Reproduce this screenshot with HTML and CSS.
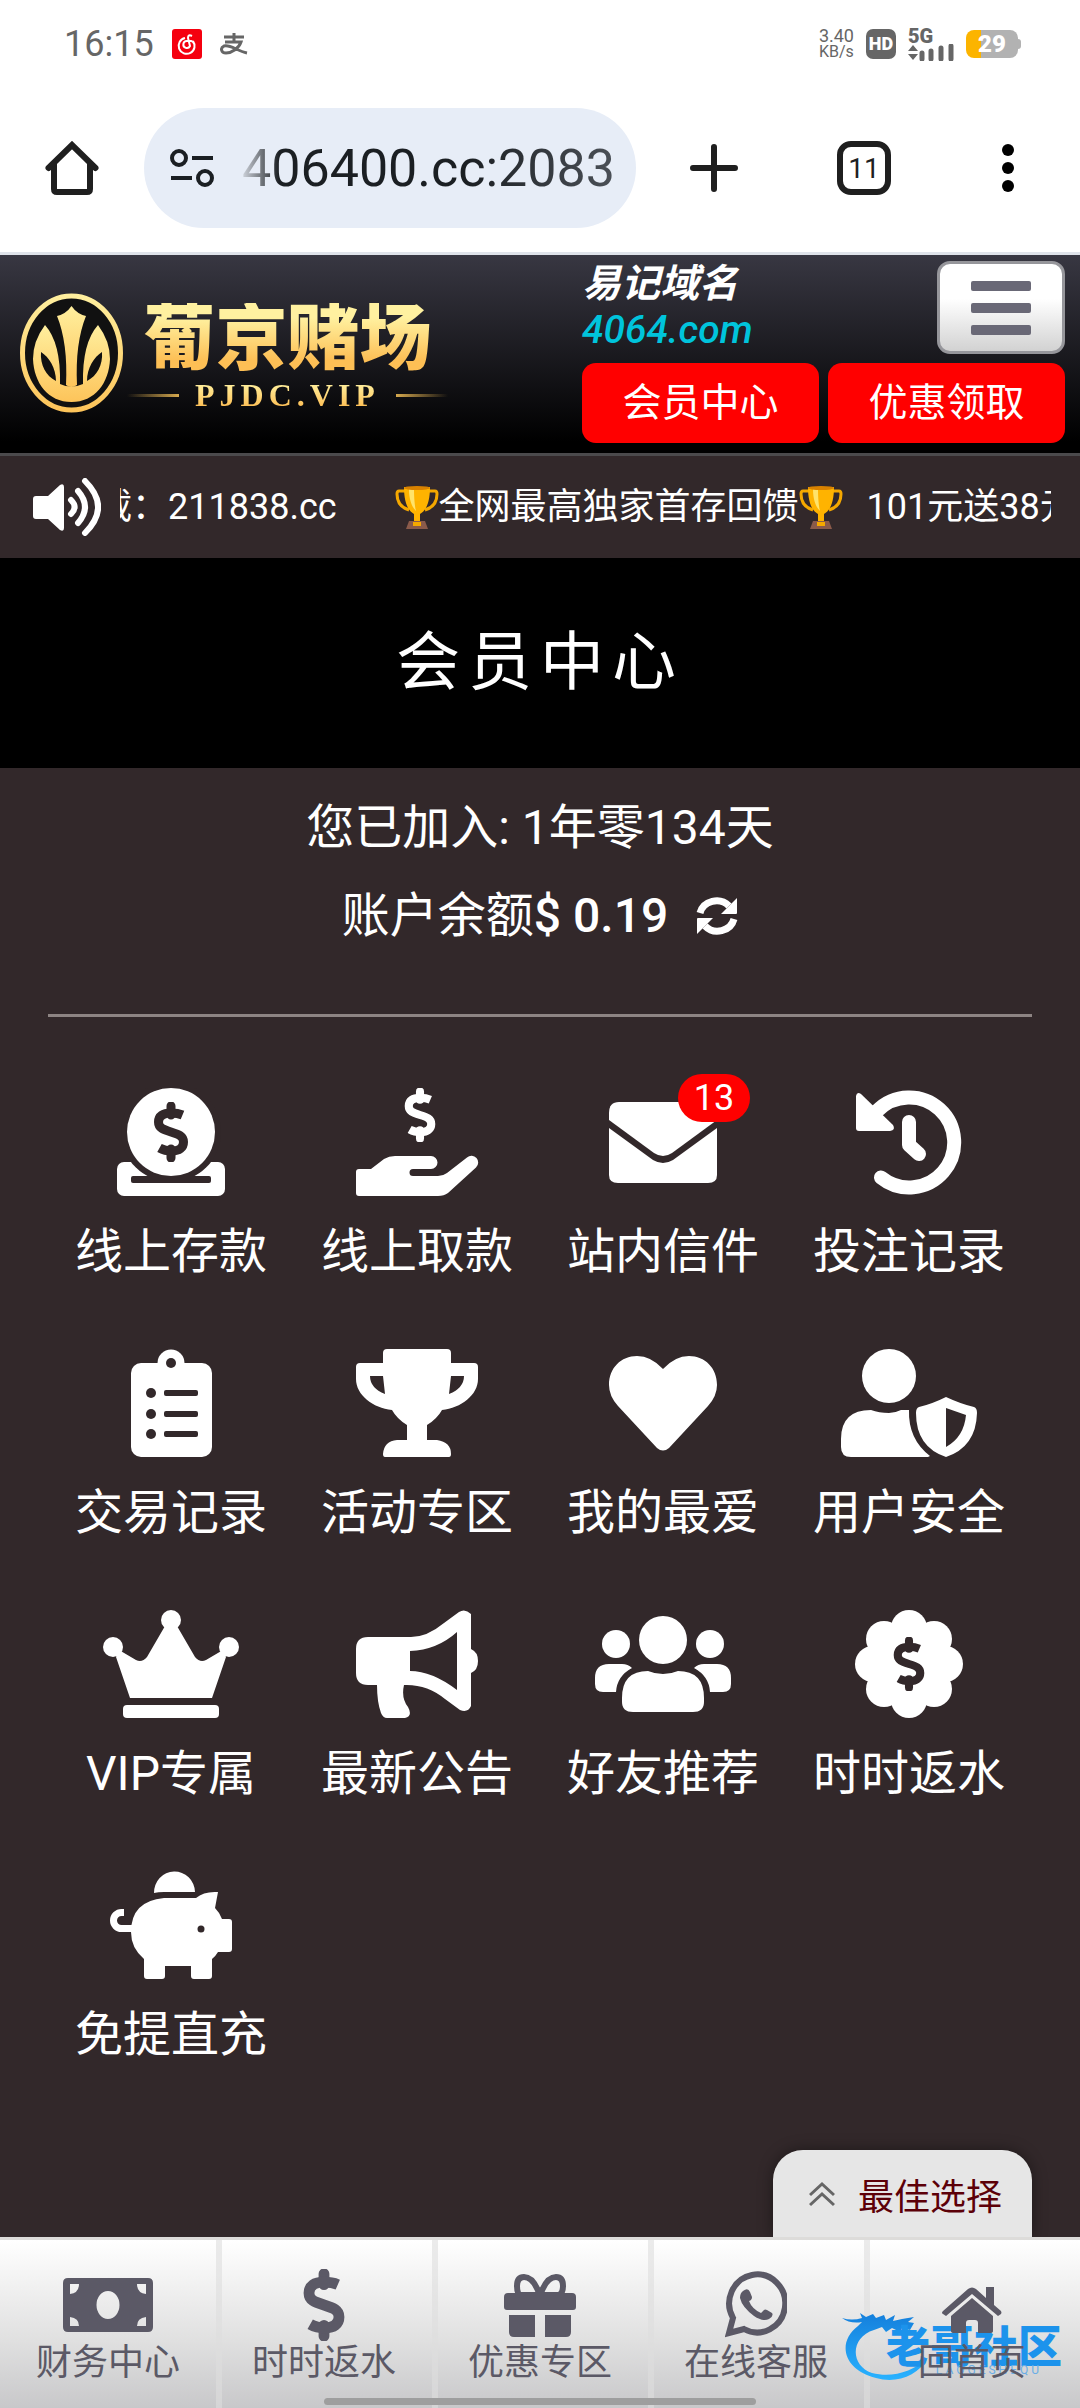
FILE: index.html
```html
<!DOCTYPE html>
<html lang="zh-CN">
<head>
    <meta charset="UTF-8">
    <meta name="viewport" content="width=device-width, initial-scale=1.0">
    <title>会员中心</title>
    <link rel="stylesheet" href="styles.css">
</head>
<body>
    <!-- Shared symbols -->
    <svg class="defs" width="0" height="0" aria-hidden="true">
        <symbol id="dollar" viewBox="0 0 34 60">
            <path d="M17 4v9M17 47v9" fill="none" stroke="currentColor" stroke-width="9" stroke-linecap="round"/>
            <path d="M28.500 13C25 11.500 21 11 17 11C9 11 4.500 14 4.500 20C4.500 26 9 27.500 17 30C25 32.500 29.500 34 29.500 40C29.500 46 25 49 18 49C13 49 9 48 5.500 46" fill="none" stroke="currentColor" stroke-width="9"/>
        </symbol>
        <symbol id="trophy-cup" viewBox="0 0 44 44">
            <path d="M10 6H4q-2 0-2 3c0 9 5 14 12 16M34 6h6q2 0 2 3c0 9-5 14-12 16" fill="none" stroke="#f5a800" stroke-width="3"/>
            <path d="M9 2h26c0 14-3 23-10 27v7h-6v-7C12 25 9 16 9 2z" fill="#ffb300"/>
            <path d="M14 4h5c0 10 1 18 2 22c-4-4-7-11-7-22z" fill="#ffe36b"/>
            <ellipse cx="22" cy="3" rx="13" ry="2" fill="#d98200"/>
            <path d="M14 36h16l3 8H11z" fill="#8a5a4a"/>
            <path d="M18 37h8v4h-8z" fill="#f5a800"/>
        </symbol>
    </svg>

    <div class="status-bar">
        <span class="clock">16:15</span>
        <svg class="app-icon" viewBox="0 0 30 30">
            <rect width="30" height="30" rx="3" fill="#f5000f"/>
            <path d="M13 9a8 8 0 1 0 8 3M20 7q-4-2-4 2l2 8a3.500 3.500 0 1 1-3-5q6-1 7 3" fill="none" stroke="#fff" stroke-width="2"/>
        </svg>
        <svg class="pay-icon" viewBox="0 0 28 22">
            <path d="M4 4h20M14 0v9M5 9h16c-2 6-9 11-15 11c-5 0-6-5-2-7c6-2 13 5 23 7" fill="none" stroke="#666" stroke-width="3"/>
        </svg>
        <div class="status-right">
            <span class="speed"><b>3.40</b>KB/s</span>
            <span class="hd">HD</span>
            <span class="signal">
                <span class="network">5G</span>
                <svg viewBox="0 0 46 17" width="46" height="17">
                    <path d="M0 7l5-6 5 6zM0 10l5 6 5-6z" fill="#666"/>
                    <path d="M14 9v6M23 7v8M33 4v11M43 2v13" stroke="#666" stroke-width="5" stroke-linecap="round"/>
                </svg>
            </span>
            <span class="battery">29</span>
        </div>
    </div>

    <div class="toolbar">
        <button class="tool-button" aria-label="主页">
            <svg viewBox="0 0 54 54" width="54" height="54">
                <path d="M3.500 27L27 4l23.500 23M9 22v26q0 3 3 3h30q3 0 3-3V22" fill="none" stroke="#1f1f1f" stroke-width="6" stroke-linecap="round"/>
            </svg>
        </button>
        <div class="address">
            <svg viewBox="0 0 44 38" width="44" height="38">
                <g fill="none" stroke="#1b1f23" stroke-width="4">
                    <circle cx="9" cy="9" r="7"/><circle cx="35" cy="29" r="7"/>
                    <path d="M22 9h21M1 29h21"/>
                </g>
            </svg>
            <span class="url">406400.cc:2083</span>
        </div>
        <button class="tool-button" aria-label="新标签页">
            <svg viewBox="0 0 48 48" width="48" height="48">
                <path d="M24 3v42M3 24h42" stroke="#1f1f1f" stroke-width="6" stroke-linecap="round"/>
            </svg>
        </button>
        <button class="tool-button tabs">11</button>
        <button class="tool-button" aria-label="更多">
            <svg viewBox="0 0 12 48" width="12" height="48">
                <circle cx="6" cy="6" r="6"/><circle cx="6" cy="24" r="6"/><circle cx="6" cy="42" r="6"/>
            </svg>
        </button>
    </div>

    <header class="site-header">
        <a class="logo" href="#">
            <svg viewBox="0 0 103 120" width="103" height="120">
                <defs>
                    <linearGradient id="gold" x1="0" y1="0" x2="0" y2="1">
                        <stop offset="0" stop-color="#ffef9e"/>
                        <stop offset="1" stop-color="#fdc45a"/>
                    </linearGradient>
                </defs>
                <ellipse cx="51.500" cy="60" rx="49" ry="57" fill="#111" stroke="url(#gold)" stroke-width="5"/>
                <path d="M51.500 13Q57 21 66 23Q55 50 57 92Q51 96 46 92Q48 50 37 23Q46 21 51.500 13Z" fill="url(#gold)"/>
                <path fill-rule="evenodd" d="M25 32Q41 50 40 91Q51 96 63 91Q62 50 78 32Q90 48 90 66C89 90 75 109 51.500 109C28 109 14 90 13 66Q13 48 25 32ZM21 59C20 72 26 83 36 88C36 75 29 64 21 59ZM82 59C74 64 67 75 67 88C77 83 83 72 82 59Z" fill="url(#gold)"/>
            </svg>
            <span class="logo-text">
                <span class="logo-name">葡京赌场</span>
                <span class="logo-domain">PJDC.VIP</span>
            </span>
        </a>
        <div class="header-side">
            <div class="header-top">
                <p class="easy-domain">易记域名<br><a href="#">4064.com</a></p>
                <button class="menu-button" aria-label="菜单"><i></i><i></i><i></i></button>
            </div>
            <div class="header-links">
                <a href="#">会员中心</a>
                <a href="#">优惠领取</a>
            </div>
        </div>
    </header>

    <div class="notice">
        <svg viewBox="0 0 68 58" width="68" height="58">
            <path d="M0 21q0-3 3-3h12L27 7q4-2 4 2v41q0 4-4 2L15 41H3q-3 0-3-3z" fill="#fff"/>
            <path d="M38 22q7 7 0 14M45 13q14 16 0 32M52 3q26 26 0 52" fill="none" stroke="#fff" stroke-width="6" stroke-linecap="round"/>
        </svg>
        <div class="marquee">
            <div class="marquee-track">
                <span class="site-address">载：211838.cc</span>
                <span class="promo"><svg width="44" height="44"><use href="#trophy-cup"/></svg>全网最高独家首存回馈<svg width="44" height="44"><use href="#trophy-cup"/></svg></span>
                <span>101元送38元</span>
            </div>
        </div>
    </div>

    <h1 class="page-title">会员中心</h1>

    <main class="member">
        <div class="summary">
            <p>您已加入: 1年零134天</p>
            <p>账户余额<strong>$ 0.19</strong>
                <button class="refresh" aria-label="刷新">
                    <svg viewBox="0 0 42 40" width="42" height="40">
                        <path d="M4 17A17 16 0 0 1 33 10M38 23A17 16 0 0 1 9 30" fill="none" stroke="#fff" stroke-width="7"/>
                        <path d="M41 2v15q0 1-1 1H25zM1 38V23q0-1 1-1h15z" fill="#fff"/>
                    </svg>
                </button>
            </p>
        </div>

        <nav class="menu-grid">
            <a class="menu-item" href="#">
                <svg class="menu-icon" viewBox="0 0 140 108">
                    <rect x="16" y="74" width="108" height="34" rx="7"/>
                    <circle class="cut" cx="70" cy="44" r="50"/>
                    <path class="cut" d="M32 88h76q2 0 2 2v3q0 2-2 2H32q-2 0-2-2v-3q0-2 2-2z"/>
                    <circle cx="70" cy="44" r="44"/>
                    <use class="cut-mark" href="#dollar" x="53" y="14" width="34" height="60"/>
                </svg>
                <span>线上存款</span>
            </a>
            <a class="menu-item" href="#">
                <svg class="menu-icon" viewBox="0 0 140 108">
                    <use href="#dollar" x="56" y="0" width="34" height="54"/>
                    <path d="M12 81H24L37 71Q42 68 48 68H84a6.500 6.500 0 0 1 0 13H66a3.500 3.500 0 0 0 0 7H91q5 0 9-3L120 69.500a6.500 6.500 0 0 1 9 10L101 105Q97 108 91 108H12Q9 108 9 105V84Q9 81 12 81Z"/>
                </svg>
                <span>线上取款</span>
            </a>
            <a class="menu-item" href="#">
                <svg class="menu-icon" viewBox="0 0 140 108">
                    <path d="M16 25Q16 14 26 14H114Q124 14 124 25V32L79 65Q70 71 61 65L16 32Z"/>
                    <path d="M16 40L60 72Q70 78 80 72L124 40V87Q124 95 115 95H25Q16 95 16 87Z"/>
                </svg>
                <b class="badge">13</b>
                <span>站内信件</span>
            </a>
            <a class="menu-item" href="#">
                <svg class="menu-icon" viewBox="0 0 140 108">
                    <path class="line" d="M42 89.500A45 45 0 1 0 38 23M70 34V57L80 66"/>
                    <path d="M17 8Q18 3 22 6L54 37Q57 42 51 43H20Q17 43 17 40Z"/>
                </svg>
                <span>投注记录</span>
            </a>
            <a class="menu-item" href="#">
                <svg class="menu-icon" viewBox="0 0 140 108">
                    <rect x="30" y="14" width="81" height="94" rx="10"/>
                    <circle cx="70" cy="14" r="13.500"/>
                    <g class="cut">
                        <circle cx="70" cy="14" r="5"/>
                        <circle cx="50" cy="44" r="5"/><circle cx="50" cy="65" r="5"/><circle cx="50" cy="85" r="5"/>
                        <rect x="63" y="41" width="34" height="6" rx="2"/><rect x="63" y="62" width="34" height="6" rx="2"/><rect x="63" y="82" width="34" height="6" rx="2"/>
                    </g>
                </svg>
                <span>交易记录</span>
            </a>
            <a class="menu-item" href="#">
                <svg class="menu-icon" viewBox="0 0 140 108">
                    <path fill-rule="evenodd" d="M36 4Q36 0 40 0H100Q104 0 104 4V14H127Q131 14 131 18V30C131 46 114 59 95 61Q90 70 80 76V91H90Q104 93 104 105Q104 108 102 108H38Q36 108 36 105Q37 92 50 91H60V76Q50 70 45 61C26 59 9 46 9 30V18Q9 14 13 14H36ZM23 27H36L38 45Q23 39 23 27ZM117 27H104L102 45Q117 39 117 27Z"/>
                </svg>
                <span>活动专区</span>
            </a>
            <a class="menu-item" href="#">
                <svg class="menu-icon" viewBox="0 0 140 108">
                    <path d="M70 20Q58 7 44 7C28 7 16 19 16 36Q16 47 25 57L64 99Q70 104 76 99L115 57Q124 47 124 36C124 19 112 7 96 7Q82 7 70 20Z"/>
                </svg>
                <span>我的最爱</span>
            </a>
            <a class="menu-item" href="#">
                <svg class="menu-icon" viewBox="0 0 140 108">
                    <circle cx="50" cy="27" r="27"/>
                    <path d="M2 90Q2 61 32 61Q40 64 50 64Q56 64 62 61H70Q69 90 91 107L89 108H12Q2 108 2 98Z"/>
                    <path fill-rule="evenodd" d="M107 48Q122 55 135 58Q138 59 138 64Q137 98 107 108Q77 98 77 64Q77 59 80 58Q93 55 107 48ZM107 59V98Q125 88 127 66Z"/>
                </svg>
                <span>用户安全</span>
            </a>
            <a class="menu-item" href="#">
                <svg class="menu-icon" viewBox="0 0 140 108">
                    <circle cx="70" cy="10" r="10"/><circle cx="12" cy="37" r="10"/><circle cx="128" cy="37" r="10"/>
                    <path d="M64 16L46 47Q41 53 35 50L18 40L15 47L29 88H111L125 47L122 40L105 50Q99 53 94 47L76 16Z"/>
                    <rect x="22" y="95" width="96" height="13" rx="4"/>
                </svg>
                <span>VIP专属</span>
            </a>
            <a class="menu-item" href="#">
                <svg class="menu-icon" viewBox="0 0 140 108">
                    <path fill-rule="evenodd" d="M21 27H64Q80 27 97 13L112 2Q118-2 124 4V39Q131 42 131 51T124 63V96Q121 103 113 100L98 89Q80 74 57 75Q54 88 61 97Q66 106 58 108H40Q36 108 34 103Q30 92 30 75H21Q9 75 9 63V39Q9 27 21 27ZM63 41V61Q85 61 110 80V22Q90 40 63 41Z"/>
                </svg>
                <span>最新公告</span>
            </a>
            <a class="menu-item" href="#">
                <svg class="menu-icon" viewBox="0 0 140 108">
                    <circle cx="70" cy="30" r="24"/><circle cx="23" cy="34" r="14"/><circle cx="117" cy="34" r="14"/>
                    <path d="M29 88Q29 61 55 61Q62 64 70 64Q78 64 85 61Q111 61 111 88V92Q111 102 100 102H40Q29 102 29 92Z"/>
                    <path d="M16 54H29Q35 54 39 58Q24 66 23 82H10Q2 82 2 74V68Q2 54 16 54ZM124 54H111Q105 54 101 58Q116 66 117 82H130Q138 82 138 74V68Q138 54 124 54Z"/>
                </svg>
                <span>好友推荐</span>
            </a>
            <a class="menu-item" href="#">
                <svg class="menu-icon" viewBox="0 0 140 108">
                    <circle cx="70" cy="54" r="40"/>
                    <circle cx="70" cy="18" r="18"/><circle cx="95" cy="29" r="18"/><circle cx="106" cy="54" r="18"/><circle cx="95" cy="79" r="18"/>
                    <circle cx="70" cy="90" r="18"/><circle cx="45" cy="79" r="18"/><circle cx="34" cy="54" r="18"/><circle cx="45" cy="29" r="18"/>
                    <use class="cut-mark" href="#dollar" x="54" y="27" width="32" height="54"/>
                </svg>
                <span>时时返水</span>
            </a>
            <a class="menu-item" href="#">
                <svg class="menu-icon" viewBox="0 0 140 108">
                    <path d="M53 22A20.500 21 0 0 1 94 21H63Q57 21 53 22Z"/>
                    <path d="M63 27H95Q103 20 117 21L114 37Q119 42 121 48H128Q131 48 131 51V78Q131 81 128 81H117Q114 86 111 88V105Q111 108 108 108H93Q90 108 90 105V95H64V105Q64 108 61 108H46Q43 108 43 105V88Q30 77 30 61Q30 30 63 27Z"/>
                    <path d="M32 57.500H20.500A8 8 0 0 1 20.500 41.500H23" fill="none" stroke="#fff" stroke-width="7"/>
                    <circle class="cut" cx="100" cy="58" r="3.500"/>
                </svg>
                <span>免提直充</span>
            </a>
        </nav>

        <button class="best-choice">
            <svg viewBox="0 0 26 26" width="26" height="26">
                <path d="M1 14L13 3l12 11M1 24l12-11 12 11" fill="none" stroke="#666" stroke-width="3"/>
            </svg>
            最佳选择
        </button>
    </main>

    <nav class="bottom-nav">
        <a href="#">
            <svg viewBox="0 0 90 72" width="90" height="72">
                <path fill-rule="evenodd" d="M5 9H85q5 0 5 5V58q0 5-5 5H5q-5 0-5-5V14q0-5 5-5zM7 15v10q9-1 9-10zM83 15H74q0 9 9 10zM7 57h9q0-8-9-9zM83 57v-9q-9 1-9 9zM45 22a11.500 14 0 1 0 0 28a11.500 14 0 1 0 0-28z"/>
            </svg>
            <span>财务中心</span>
        </a>
        <a href="#">
            <svg viewBox="0 0 42 72" width="42" height="72"><use href="#dollar" width="42" height="72"/></svg>
            <span>时时返水</span>
        </a>
        <a href="#">
            <svg viewBox="0 0 72 72" width="72" height="72">
                <path d="M4 24h64q4 0 4 4v10q0 3-3 3H3q-3 0-3-3V28q0-4 4-4zM5 46h26v22H10q-5 0-5-5zM41 46h26v17q0 5-5 5H41z"/>
                <path d="M35 24Q29 8 20 8Q13 8 13 17T17 26H55Q59 24 59 17Q59 8 52 8Q43 8 37 24" fill="none" stroke="#5b5966" stroke-width="6"/>
            </svg>
            <span>优惠专区</span>
        </a>
        <a href="#">
            <svg viewBox="0 0 62 72" width="62" height="72">
                <path d="M4 64L8 49A28 29 0 1 1 19 60Z" fill="none" stroke="#5b5966" stroke-width="6"/>
                <path d="M18 22q5-4 7 1l2 5q0 3-3 4q3 8 12 12l3-3q1-1 3 0l5 3q2 3-3 6q-6 3-15-3Q17 38 15 29q0-5 3-7z"/>
            </svg>
            <span>在线客服</span>
        </a>
        <a href="#">
            <svg viewBox="0 0 62 72" width="62" height="72">
                <path d="M2 42L27 20q4-3 8 0L45 29V18h8V36L60 42q1 2 0 3l-3 2L31 25 5 47l-3-2q-2-1 0-3z"/>
                <path d="M10 47L31 29 52 47V62q0 2-3 2H37V54q0-3-3-3h-6q-3 0-3 3V64H13q-3 0-3-2z"/>
            </svg>
            <span>回首页</span>
        </a>
        <div class="watermark">
            <svg viewBox="0 0 86 70" width="86" height="70">
                <defs>
                    <linearGradient id="wave" x1="0" y1="0" x2="0" y2="1">
                        <stop offset="0" stop-color="#147fdc"/>
                        <stop offset="1" stop-color="#29b2ff"/>
                    </linearGradient>
                </defs>
                <path d="M0 6Q10 9 20 6L18 1L24 5L31 2L34 6L42 3L44 8L53 3L51 9L60 7L72 5L66 10L72 11L68 18L60 16L58 20L50 16L44 20L40 15L32 18C8 25 8 54 30 61C50 66 70 60 86 46C76 64 54 72 34 66C2 58-6 31 16 14L20 10Q8 12 0 6Z" fill="url(#wave)"/>
            </svg>
            <span class="watermark-name">老哥社区</span>
            <span class="watermark-latin">LAOGESHEQU</span>
        </div>
        <i class="gesture-bar"></i>
    </nav>
</body>
</html>
```
FILE: styles.css
```css
* {
    box-sizing: border-box;
}

body {
    margin: 0;
    min-height: 100vh;
    display: flex;
    flex-direction: column;
    background: #32282a;
    color: #fff;
    font-family: Roboto, "Noto Sans CJK SC", sans-serif;
    font-size: 36px;
}

a {
    color: inherit;
    text-decoration: none;
}

p {
    margin: 0;
}

button {
    margin: 0;
    padding: 0;
    border: 0;
    background: none;
    color: inherit;
    font: inherit;
    cursor: pointer;
}

svg {
    flex: none;
}

.defs {
    position: absolute;
}

/* Phone status bar */
.status-bar {
    height: 84px;
    padding: 4px 62px 0 64px;
    display: flex;
    align-items: center;
    background: #fff;
    color: #666;
}

.clock {
    font-size: 36px;
}

.app-icon {
    width: 30px;
    height: 30px;
    margin-left: 18px;
}

.pay-icon {
    width: 28px;
    height: 22px;
    margin-left: 18px;
}

.status-right {
    margin-left: auto;
    display: flex;
    align-items: center;
    gap: 12px;
}

.speed {
    font-size: 16px;
    line-height: 16px;
    text-align: center;
}

.speed b {
    display: block;
    font-size: 18px;
    font-weight: 400;
}

.hd {
    width: 30px;
    height: 30px;
    border-radius: 7px;
    background: #666;
    color: #fff;
    font-size: 18px;
    font-weight: 900;
    line-height: 30px;
    text-align: center;
}

.signal {
    display: flex;
    flex-direction: column;
}

.network {
    font-size: 20px;
    font-weight: 900;
    line-height: 16px;
}

.battery {
    width: 52px;
    height: 28px;
    border-radius: 8px;
    background: linear-gradient(90deg, #fcb400 29%, #b2b2b2 29%);
    color: #fff;
    font-size: 24px;
    font-weight: 900;
    line-height: 28px;
    text-align: center;
    position: relative;
}

.battery::after {
    content: "";
    position: absolute;
    right: -3px;
    top: 9px;
    width: 4px;
    height: 10px;
    border-radius: 0 3px 3px 0;
    background: #b2b2b2;
}

/* Browser toolbar */
.toolbar {
    height: 171px;
    padding: 0 45px;
    display: flex;
    align-items: center;
    background: #fff;
    color: #1f1f1f;
    border-bottom: 3px solid #dfe3ea;
}

.tool-button {
    min-width: 54px;
    display: flex;
    align-items: center;
    justify-content: center;
}

.address {
    flex: 1;
    height: 120px;
    margin: 0 51px 0 45px;
    padding: 0 20px 0 26px;
    display: flex;
    align-items: center;
    gap: 28px;
    border-radius: 60px;
    background: #e7edf7;
    overflow: hidden;
}

.url {
    font-size: 52px;
    background: linear-gradient(90deg, #d0d5dd, #1b1f23 10%, #1b1f23 60%, #4b5057);
    -webkit-background-clip: text;
    background-clip: text;
    color: transparent;
}

.tabs {
    height: 54px;
    margin: 0 90px 0 96px;
    border: 6px solid #1f1f1f;
    border-radius: 14px;
    font-size: 28px;
}

/* Site header */
.site-header {
    padding: 6px 15px 10px 20px;
    display: flex;
    justify-content: space-between;
    background: linear-gradient(#383742, #000 94%);
    border-bottom: 3px solid #4b4a4c;
}

.logo {
    display: flex;
    align-items: center;
    gap: 4px;
    padding-top: 2px;
}

.logo-text {
    padding-top: 12px;
    display: flex;
    flex-direction: column;
    align-items: center;
}

.logo-name,
.logo-domain {
    background: linear-gradient(#fff1a0 20%, #fdbf55 80%);
    -webkit-background-clip: text;
    background-clip: text;
    color: transparent;
}

.logo-name {
    font-size: 72px;
    font-weight: 900;
    line-height: 72px;
}

.logo-domain {
    display: flex;
    align-items: center;
    gap: 16px;
    font-family: "Liberation Serif", serif;
    font-size: 32px;
    font-weight: 700;
    line-height: 40px;
    letter-spacing: 5px;
}

.logo-domain::before,
.logo-domain::after {
    content: "";
    width: 52px;
    height: 3px;
    background: linear-gradient(90deg, transparent, #d6a94e);
}

.logo-domain::after {
    background: linear-gradient(90deg, #d6a94e, transparent);
}

.header-side {
    width: 483px;
    display: flex;
    flex-direction: column;
    gap: 9px;
}

.header-top {
    display: flex;
    justify-content: space-between;
}

.easy-domain {
    font-size: 39px;
    font-style: italic;
    font-weight: 700;
    line-height: 46px;
}

.easy-domain a {
    color: #00c4dc;
    font-weight: 500;
}

.menu-button {
    width: 128px;
    height: 93px;
    display: flex;
    flex-direction: column;
    align-items: center;
    justify-content: center;
    gap: 12px;
    border: 3px solid #96969b;
    border-radius: 13px;
    background: linear-gradient(#fff 40%, #d2d2d2);
}

.menu-button i {
    width: 60px;
    height: 10px;
    border-radius: 2px;
    background: #696876;
}

.header-links {
    display: grid;
    grid-template-columns: 1fr 1fr;
    gap: 9px;
}

.header-links a {
    border-radius: 14px;
    background: #f00;
    font-size: 39px;
    line-height: 80px;
    text-align: center;
}

/* Scrolling notice */
.notice {
    height: 102px;
    padding: 0 29px 0 33px;
    display: flex;
    align-items: center;
    gap: 19px;
}

.marquee {
    flex: 1;
    overflow: hidden;
}

.marquee-track {
    margin-left: -24px;
    display: flex;
    gap: 24px;
    white-space: nowrap;
    line-height: 60px;
}

.site-address {
    padding-right: 34px;
}

.promo {
    display: flex;
    align-items: center;
}

.page-title {
    margin: 0;
    background: #000;
    font-size: 64px;
    font-weight: 400;
    line-height: 210px;
    letter-spacing: 8px;
    text-align: center;
}

/* Member centre */
.member {
    flex: 1;
    padding: 16px 48px 0;
    position: relative;
}

.summary {
    padding-bottom: 54px;
    border-bottom: 3px solid #8d8483;
    font-size: 48px;
    line-height: 88px;
}

.summary p {
    display: flex;
    justify-content: center;
}

.summary strong {
    font-weight: 500;
}

.refresh {
    margin-left: 28px;
    display: flex;
    align-items: center;
}

.menu-grid {
    padding-top: 71px;
    display: grid;
    grid-template-columns: repeat(4, 1fr);
    row-gap: 67px;
}

.menu-item {
    position: relative;
    display: flex;
    flex-direction: column;
    align-items: center;
    gap: 26px;
    font-size: 48px;
    line-height: 60px;
}

.menu-icon {
    width: 140px;
    height: 108px;
    fill: #fff;
    color: #fff;
}

.menu-icon .cut {
    fill: #32282a;
}

.menu-icon .cut-mark {
    color: #32282a;
}

.menu-icon .line {
    fill: none;
    stroke: #fff;
    stroke-width: 14px;
    stroke-linecap: round;
    stroke-linejoin: round;
}

.badge {
    position: absolute;
    left: 50%;
    top: -14px;
    margin-left: 15px;
    min-width: 72px;
    border-radius: 24px;
    background: #f00;
    font-size: 36px;
    font-weight: 400;
    line-height: 48px;
    text-align: center;
}

.best-choice {
    position: absolute;
    right: 48px;
    bottom: 0;
    height: 87px;
    padding: 0 30px 0 36px;
    display: flex;
    align-items: center;
    gap: 23px;
    border-radius: 30px 30px 0 0;
    background: #e6e6e6;
    box-shadow: 0 0 15px rgba(0, 0, 0, 0.4);
    color: #5c0008;
}

/* Bottom navigation */
.bottom-nav {
    position: relative;
    display: grid;
    grid-template-columns: repeat(5, 1fr);
    border-top: 3px solid #dddcda;
    background: linear-gradient(#fff, #e0e0e0 60%, #c8c8ca);
    color: #5b5966;
    fill: #5b5966;
}

.bottom-nav a {
    height: 168px;
    padding-top: 29px;
    display: flex;
    flex-direction: column;
    align-items: center;
    line-height: 44px;
}

.bottom-nav a + a {
    box-shadow: inset 6px 0 rgba(222, 222, 222, 0.6);
}

.bottom-nav a svg,
.bottom-nav a span {
    position: relative;
    z-index: 1;
}

.watermark {
    position: absolute;
    right: 18px;
    bottom: 26px;
    width: 220px;
    height: 70px;
}

.watermark-name {
    position: absolute;
    right: 0;
    top: 14px;
    color: #1c93ec;
    font-size: 44px;
    font-weight: 900;
    line-height: 44px;
}

.watermark-latin {
    position: absolute;
    right: 20px;
    bottom: 6px;
    color: #6aaee6;
    font-size: 12px;
    line-height: 12px;
    letter-spacing: 3px;
}

.gesture-bar {
    position: absolute;
    left: 30%;
    right: 30%;
    bottom: 3px;
    z-index: 2;
    height: 7px;
    border-radius: 4px;
    background: #9e9e9e;
}
```
